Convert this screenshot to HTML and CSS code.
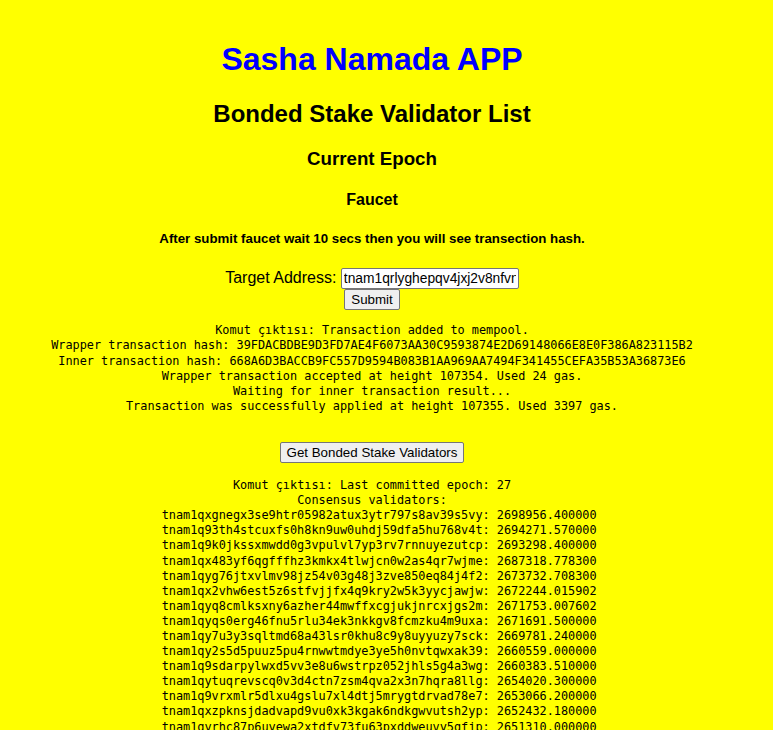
FILE: index.html
```html
<!DOCTYPE html>
<html lang="en">
<head>
<meta charset="utf-8">
<title>Sasha Namada APP</title>
<link rel="stylesheet" href="styles.css">
</head>
<body>
<main class="page">
  <h1 class="title">Sasha Namada APP</h1>
  <h2 class="subtitle">Bonded Stake Validator List</h2>
  <h3 class="section">Current Epoch</h3>
  <h4 class="section-small">Faucet</h4>
  <h5 class="note">After submit faucet wait 10 secs then you will see transection hash.</h5>
  <form class="faucet-form">
    <label class="field-label" for="addr">Target Address:</label> <input class="field-input" id="addr" type="text" value="tnam1qrlyghepqv4jxj2v8nfvn7t0dj2l0xf5wz3n8a6q"><br>
    <button class="btn" type="button">Submit</button>
  </form>
  <pre class="output">Komut çıktısı: Transaction added to mempool.
Wrapper transaction hash: 39FDACBDBE9D3FD7AE4F6073AA30C9593874E2D69148066E8E0F386A823115B2
Inner transaction hash: 668A6D3BACCB9FC557D9594B083B1AA969AA7494F341455CEFA35B53A36873E6
Wrapper transaction accepted at height 107354. Used 24 gas.
Waiting for inner transaction result...
Transaction was successfully applied at height 107355. Used 3397 gas.

</pre>
  <div class="actions">
    <button class="btn" type="button">Get Bonded Stake Validators</button>
  </div>
  <pre class="output output-list">Komut çıktısı: Last committed epoch: 27
Consensus validators:
  tnam1qxgnegx3se9htr05982atux3ytr797s8av39s5vy: 2698956.400000
  tnam1q93th4stcuxfs0h8kn9uw0uhdj59dfa5hu768v4t: 2694271.570000
  tnam1q9k0jkssxmwdd0g3vpulvl7yp3rv7rnnuyezutcp: 2693298.400000
  tnam1qx483yf6qgfffhz3kmkx4tlwjcn0w2as4qr7wjme: 2687318.778300
  tnam1qyg76jtxvlmv98jz54v03g48j3zve850eq84j4f2: 2673732.708300
  tnam1qx2vhw6est5z6stfvjjfx4q9kry2w5k3yycjawjw: 2672244.015902
  tnam1qyq8cmlksxny6azher44mwffxcgjukjnrcxjgs2m: 2671753.007602
  tnam1qyqs0erg46fnu5rlu34ek3nkkgv8fcmzku4m9uxa: 2671691.500000
  tnam1qy7u3y3sqltmd68a43lsr0khu8c9y8uyyuzy7sck: 2669781.240000
  tnam1qy2s5d5puuz5pu4rnwwtmdye3ye5h0nvtqwxak39: 2660559.000000
  tnam1q9sdarpylwxd5vv3e8u6wstrpz052jhls5g4a3wg: 2660383.510000
  tnam1qytuqrevscq0v3d4ctn7zsm4qva2x3n7hqra8llg: 2654020.300000
  tnam1q9vrxmlr5dlxu4gslu7xl4dtj5mrygtdrvad78e7: 2653066.200000
  tnam1qxzpknsjdadvapd9vu0xk3kgak6ndkgwvutsh2yp: 2652432.180000
  tnam1qyrhc87p6uyewa2xtdfv73fu63pxddweuvy5gfjp: 2651310.000000
  tnam1qx7c2fh3kq5y0w8l9ma4dz6rgv3tn2pj8sexu4hd: 2649875.120000
  tnam1q8w3zk5hxqf2dpj7ml0yc9ra6vgu4tne8s3wd5kx: 2648120.000000
</pre>
</main>
</body>
</html>
```
FILE: styles.css
```css
html {
  background: #ffff00;
}

body {
  margin: 0;
  padding: 20px 37px 8px 8px;
  background: #ffff00;
  color: #000000;
  font-family: "Liberation Sans", Arial, sans-serif;
  font-size: 16px;
}

.page {
  text-align: center;
}

.title {
  font-size: 32px;
  margin: 21.44px 0;
  color: #0000ff;
}

.subtitle {
  font-size: 24px;
  margin: 19.92px 0;
}

.section {
  font-size: 18.72px;
  margin: 18.72px 0;
}

.section-small {
  font-size: 16px;
  margin: 21.28px 0;
}

.note {
  font-size: 13.28px;
  margin: 22.18px 0;
}

.faucet-form {
  margin: 0;
}

.field-label {
  font-size: 16px;
}

.field-input {
  box-sizing: border-box;
  width: 178px;
  height: 21px;
  padding: 1px 2px;
  font-family: "Liberation Sans", Arial, sans-serif;
  font-size: 13.8px;
  color: #000000;
  background: #ffffff;
  border: 1px solid #767676;
  border-radius: 2px;
}

.btn {
  box-sizing: border-box;
  height: 21px;
  padding: 1px 6px;
  font-family: "Liberation Sans", Arial, sans-serif;
  font-size: 13.33px;
  color: #000000;
  background: #efefef;
  border: 1px solid #767676;
  border-radius: 2px;
}

.actions {
  margin: 0;
}

.output {
  margin: 13px 0;
  font-family: "DejaVu Sans Mono", "Liberation Mono", monospace;
  font-size: 11.85px;
  line-height: 15.1px;
  text-align: center;
  color: #000000;
}

.output-list {
  margin-top: 15px;
}
```
